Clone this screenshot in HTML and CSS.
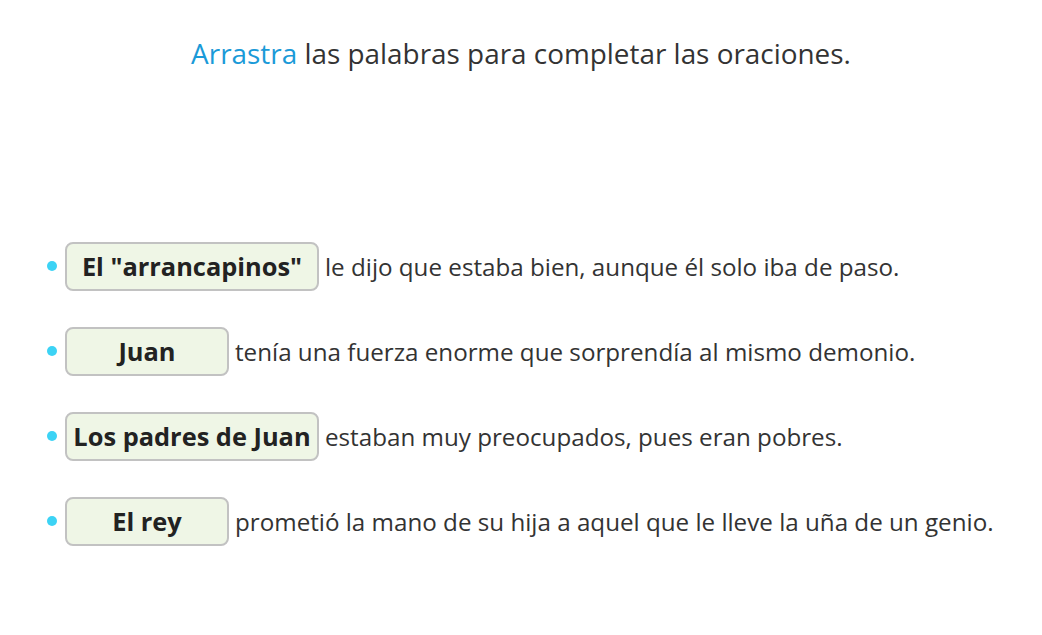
FILE: index.html
```html
<!DOCTYPE html>
<html lang="es">
<head>
<meta charset="utf-8">
<link rel="stylesheet" href="styles.css">
</head>
<body>
<div class="page">
  <h1 class="title"><span class="accent">Arrastra</span> las palabras para completar las oraciones.</h1>
  <ul class="rows">
    <li class="row"><span class="dot"></span><span class="chip chip-wide">El "arrancapinos"</span><span class="text">le dijo que estaba bien, aunque él solo iba de paso.</span></li>
    <li class="row"><span class="dot"></span><span class="chip">Juan</span><span class="text">tenía una fuerza enorme que sorprendía al mismo demonio.</span></li>
    <li class="row"><span class="dot"></span><span class="chip chip-wide">Los padres de Juan</span><span class="text">estaban muy preocupados, pues eran pobres.</span></li>
    <li class="row"><span class="dot"></span><span class="chip">El rey</span><span class="text">prometió la mano de su hija a aquel que le lleve la uña de un genio.</span></li>
  </ul>
</div>
</body>
</html>
```

FILE: styles.css
```css
html, body {
  margin: 0;
  padding: 0;
  background: #ffffff;
}
.page {
  width: 1042px;
  height: 635px;
  font-family: "Open Sans", "Noto Sans", sans-serif;
  color: #333333;
}
.title {
  margin: 0;
  padding-top: 34px;
  font-size: 27.9px;
  font-weight: 400;
  line-height: 38px;
  text-align: center;
  color: #333333;
}
.accent {
  color: #1a9ad8;
}
.rows {
  list-style: none;
  margin: 0;
  padding: 0 0 0 47px;
  margin-top: 170px;
  display: flex;
  flex-direction: column;
  gap: 37px;
}
.row {
  display: flex;
  align-items: center;
  height: 48px;
}
.dot {
  width: 10px;
  height: 10px;
  border-radius: 50%;
  background: #3cd3f5;
  margin-right: 8px;
  flex: none;
}
.chip {
  box-sizing: border-box;
  width: 164px;
  height: 49px;
  padding: 0 2px;
  border: 2px solid #c2c2c2;
  border-radius: 8px;
  background: #eff6e6;
  font-weight: 700;
  font-size: 25.4px;
  color: #222222;
  display: flex;
  align-items: center;
  justify-content: center;
  white-space: nowrap;
  flex: none;
}
.chip-wide {
  width: 254px;
}
.text {
  margin-left: 6px;
  font-size: 24.2px;
  color: #333333;
  white-space: nowrap;
}
```
